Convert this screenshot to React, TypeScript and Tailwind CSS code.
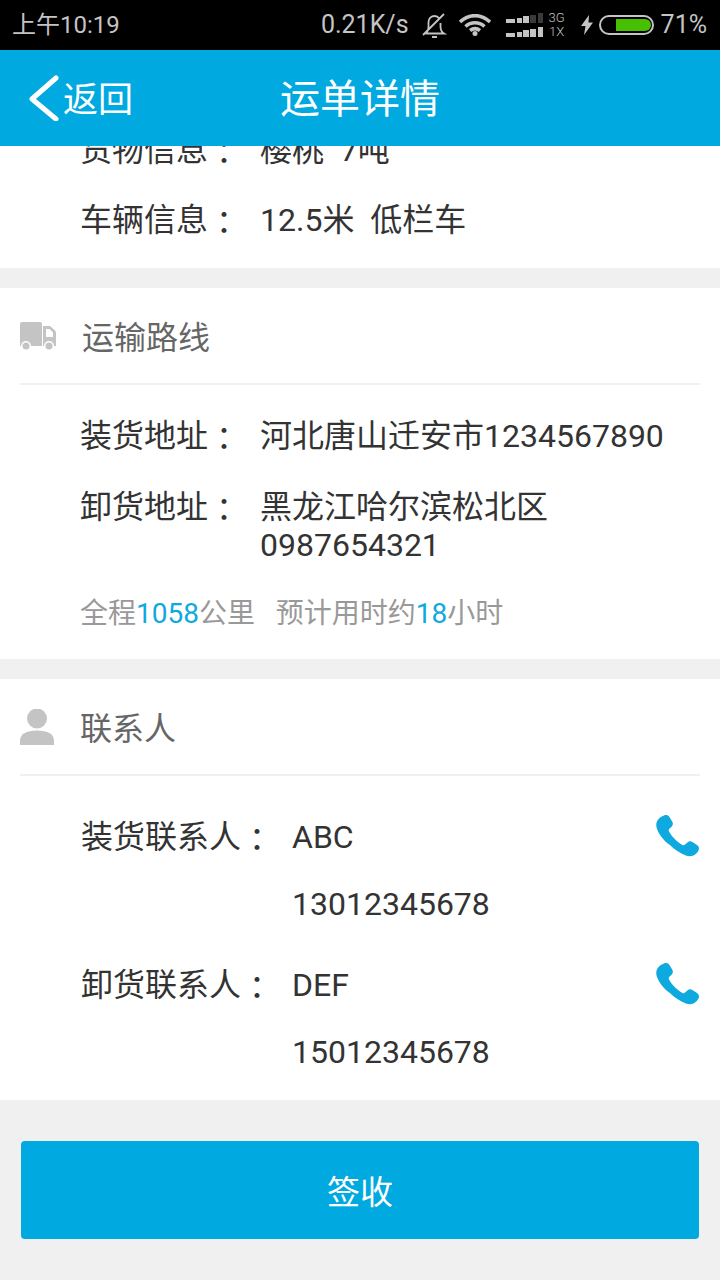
import React from "react";

const FONT = "font-['Roboto','Noto_Sans_CJK_SC',sans-serif]";

const TruckIcon = () => (
  <svg width="36" height="28" viewBox="0 0 36 28">
    <path fill="#c4c4c4" d="M2 0h18a2 2 0 0 1 2 2v22H0V2a2 2 0 0 1 2-2z" />
    <path fill="#c4c4c4" fillRule="evenodd" d="M23 4h7l5 4.500a3 3 0 0 1 1 2.200V24H23zM26 7v8h7v-4.500L29.500 7z" />
    <circle cx="6" cy="24" r="5" fill="#fff" />
    <circle cx="29" cy="24" r="5" fill="#fff" />
    <circle cx="6" cy="24" r="3.500" fill="#c4c4c4" />
    <circle cx="29" cy="24" r="3.500" fill="#c4c4c4" />
  </svg>
);

const PersonIcon = () => (
  <svg width="34" height="36" viewBox="0 0 34 36" fill="#c4c4c4">
    <circle cx="17" cy="9.500" r="10" />
    <path d="M0 36v-4c0-7 6-10.500 17-10.500S34 25 34 32v4z" />
  </svg>
);

const PhoneIcon = () => (
  <svg width="44" height="44" viewBox="0 0 44 44" fill="#0ea9de">
    <path d="M8 .5c2-.9 4.200-.4 5.300 1.200l3 5c1 1.700.7 3.600-.7 5l-2.200 2.100c-.8.800-.9 1.700-.4 2.700 1.500 2.700 3.400 5.300 5.700 7.600 2.400 2.400 5 4.400 7.700 5.900 1 .5 1.900.3 2.700-.5l2.300-2.100c1.500-1.300 3.400-1.500 5-.5l4.600 3c1.700 1.100 2.400 3.300 1.700 5.200-1 2.500-3 4.400-5.300 5.500-2.400 1-5 1-7.500 0-6-2.400-11.500-6-16-10.500C7.300 25.500 3.500 20 1 14 0 11.400 0 8.600 1 6.300 2.200 3.800 5 1.500 8 .5z" />
  </svg>
);

// the colon sits centred in its cell in the reference, which is how the TC face draws it
const Label = ({ text }: { text: string }) => (
  <>
    {text}
    <span className="leading-[0] align-[-3px] font-['Noto_Sans_CJK_TC',sans-serif]">：</span>
  </>
);

const Row = ({ label, value, className = "" }: { label: string; value: React.ReactNode; className?: string }) => (
  <div className={`flex pl-[80px] text-[32px] leading-[38px] text-[#333] ${className}`}>
    <span className="w-[180px] shrink-0 whitespace-nowrap">
      <Label text={label} />
    </span>
    <span className="whitespace-pre-wrap">{value}</span>
  </div>
);

const SectionHead = ({ icon, title, titleClass }: { icon: React.ReactNode; title: string; titleClass: string }) => (
  <div className="mx-5 h-[97px] flex items-center border-b-2 border-[#f0f0f0]">
    <span className={`shrink-0 flex items-center ${titleClass}`}>{icon}</span>
    <span className="pt-[5px] text-[32px] text-[#666]">{title}</span>
  </div>
);

const Contact = ({ label, name, phone, className = "" }: { label: string; name: string; phone: string; className?: string }) => (
  <div className={`relative pl-[81px] text-[32px] leading-[37px] text-[#333] ${className}`}>
    <div className="flex">
      <span className="w-[211px] shrink-0 whitespace-nowrap">
        <Label text={label} />
      </span>
      <span>{name}</span>
    </div>
    <div className="pl-[211px] mt-[30px]">{phone}</div>
    <div className="absolute right-5 top-[-4px]">
      <PhoneIcon />
    </div>
  </div>
);

function Bars({ dim = false }: { dim?: boolean }) {
  const bars = [
    { h: 4, w: 10 },
    { h: 5, w: 5 },
    { h: 7, w: 6 },
    { h: 8, w: 6 },
    { h: 10, w: 5 },
  ];
  return (
    <div className="h-[10px] flex items-end gap-[1.5px]">
      {bars.map((b, i) => (
        <span
          key={i}
          className={dim && i > 2 ? "bg-[#3a3a3a]" : "bg-[#c4c4c4]"}
          style={{ height: b.h, width: b.w }}
        />
      ))}
    </div>
  );
}

export default function App() {
  return (
    <div className={`w-[720px] h-[1280px] overflow-hidden flex flex-col bg-[#f0f0f0] ${FONT}`}>
      {/* status bar */}
      <div className="h-[50px] shrink-0 bg-black text-[#c4c4c4] flex items-center pl-3 pr-[13px]">
        <span className="text-[24px]">上午10:19</span>
        <div className="ml-auto flex items-center text-[25px]">
          <span>0.21K/s</span>
          <svg className="ml-[13px]" width="25" height="25" viewBox="0 0 25 25" fill="none" stroke="#c4c4c4" strokeWidth="1.800">
            <path d="M3.500 20.500c2-1.500 3-3.500 3-7V9c0-3.500 2.800-6 6-6 2 0 3.800 1 4.800 2.500M18.500 10v3.500c0 3.500 1 5.500 3.500 7H3.500M10 24h5M1 22 22 1" />
          </svg>
          <svg className="ml-[12px]" width="32" height="22" viewBox="0 0 32 22" fill="none" stroke="#c4c4c4" strokeWidth="3.500">
            <path d="M1 8c9-8.500 21-8.500 30 0M6.500 12.500c5.500-5 13.500-5 19 0M11 16.500c3-2.300 7-2.300 10 0" />
            <circle cx="16" cy="19.500" r="2.500" fill="#c4c4c4" stroke="none" />
          </svg>
          <div className="ml-[15px] w-[37px] flex flex-col gap-[4px]">
            <Bars dim />
            <Bars />
          </div>
          <div className="ml-[6px] w-[16px] flex flex-col items-center font-light text-[13px] leading-[14px]">
            <span>3G</span>
            <span>1X</span>
          </div>
          <svg className="ml-[16px]" width="12" height="20" viewBox="0 0 12 20" fill="#c4c4c4">
            <path d="M8 0 0 11h4.500L3 20l9-12.500H7.500z" />
          </svg>
          <div className="ml-[6px] w-[55px] h-[20px] rounded-[10px] border-2 border-[#c4c4c4] py-[2px] pr-[1px] flex justify-end">
            <div className="w-[35px] h-full rounded-r-[6px] bg-[#46c000]" />
          </div>
          <span className="ml-[7px]">71%</span>
        </div>
      </div>

      {/* header */}
      <div className="h-[96px] shrink-0 bg-[#00a9e0] relative flex items-center text-white">
        <svg className="ml-[29px]" width="30" height="46" viewBox="0 0 30 46" fill="none" stroke="#fff" strokeWidth="5" strokeLinecap="round" strokeLinejoin="round">
          <path d="M27 3 3 24l24 20" />
        </svg>
        <span className="ml-1 pt-[6px] text-[35px]">返回</span>
        <span className="absolute left-[280px] pt-[4px] text-[40px]">运单详情</span>
      </div>

      {/* first card, scrolled under the header */}
      <div className="h-[122px] shrink-0 bg-white overflow-hidden">
        <Row label="货物信息" value="樱桃  7吨" className="mt-[-15px]" />
        <Row label="车辆信息" value="12.5米  低栏车" className="mt-[32px]" />
      </div>

      <div className="mt-5 h-[371px] shrink-0 bg-white">
        <SectionHead icon={<TruckIcon />} title="运输路线" titleClass="w-[62px]" />
        <Row label="装货地址" value="河北唐山迁安市1234567890" className="mt-[32px]" />
        <Row label="卸货地址" value={"黑龙江哈尔滨松北区\n0987654321"} className="mt-[33px]" />
        <div className="mt-[33px] pl-[80px] text-[28px] leading-[33px] text-[#999] whitespace-pre">
          全程<span className="text-[#0ea9de]">1058</span>公里   预计用时约<span className="text-[#0ea9de]">18</span>小时
        </div>
      </div>

      <div className="mt-5 h-[421px] shrink-0 bg-white">
        <SectionHead icon={<PersonIcon />} title="联系人" titleClass="w-[60px]" />
        <Contact label="装货联系人" name="ABC" phone="13012345678" className="mt-[43px]" />
        <Contact label="卸货联系人" name="DEF" phone="15012345678" className="mt-[44px]" />
      </div>

      <div className="mx-[21px] mt-[41px] h-[98px] rounded-[4px] bg-[#00a9e0] flex items-center justify-center pt-[6px] text-white text-[33px]">
        签收
      </div>
    </div>
  );
}
